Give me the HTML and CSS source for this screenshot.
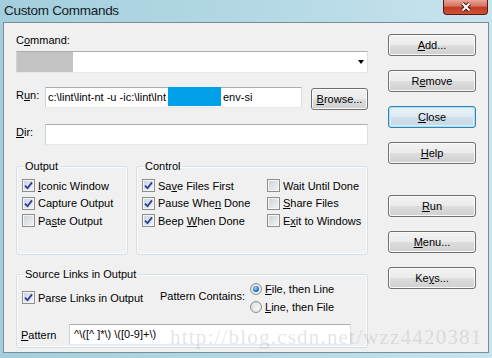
FILE: index.html
```html
<!DOCTYPE html>
<html lang="en">
<head>
    <meta charset="UTF-8">
    <meta name="viewport" content="width=device-width, initial-scale=1.0">
    <title>Custom Commands</title>
    <link rel="stylesheet" href="styles.css">
</head>
<body>
<div class="window">
    <div class="titlebar">
        <span class="title">Custom Commands</span>
        <div class="close-x">
            <svg width="14" height="10" viewBox="0 0 14 10">
                <path d="M3.5 1.5 L10.5 8.5 M10.5 1.5 L3.5 8.5" stroke="#4a1810" stroke-width="4" fill="none"/>
                <path d="M3.5 1.5 L10.5 8.5 M10.5 1.5 L3.5 8.5" stroke="#ffffff" stroke-width="2" fill="none"/>
            </svg>
        </div>
    </div>

    <div class="client">
        <div class="main">
            <div class="label">C<u>o</u>mmand:</div>
            <div class="combo">
                <span class="combo-sel"></span>
                <span class="combo-arrow"></span>
            </div>

            <div class="field-row run-row">
                <span class="field-label">R<u>u</u>n:</span>
                <div class="textbox run-box">c:\lint\lint-nt -u -ic:\lint\lnt<span class="mask"></span>env-si</div>
                <button class="btn browse"><u>B</u>rowse...</button>
            </div>

            <div class="field-row dir-row">
                <span class="field-label"><u>D</u>ir:</span>
                <div class="textbox dir-box"></div>
            </div>

            <!-- Output / Control -->
            <div class="groups">
                <fieldset class="group output">
                    <legend>Output</legend>
                    <div class="check-row"><span class="cb on"><svg width="9" height="9" viewBox="0 0 9 9"><path d="M1 4.6 L3.5 7.2 L8 1.4" fill="none" stroke="#2c3d8f" stroke-width="1.8"/></svg></span><span><u>I</u>conic Window</span></div>
                    <div class="check-row"><span class="cb on"><svg width="9" height="9" viewBox="0 0 9 9"><path d="M1 4.6 L3.5 7.2 L8 1.4" fill="none" stroke="#2c3d8f" stroke-width="1.8"/></svg></span><span>Capture Output</span></div>
                    <div class="check-row"><span class="cb"></span><span>Pa<u>s</u>te Output</span></div>
                </fieldset>
                <fieldset class="group control">
                    <legend>Control</legend>
                    <div class="check-grid">
                        <div class="check-row"><span class="cb on"><svg width="9" height="9" viewBox="0 0 9 9"><path d="M1 4.6 L3.5 7.2 L8 1.4" fill="none" stroke="#2c3d8f" stroke-width="1.8"/></svg></span><span>Sa<u>v</u>e Files First</span></div>
                        <div class="check-row"><span class="cb"></span><span>Wait Until Done</span></div>
                        <div class="check-row"><span class="cb on"><svg width="9" height="9" viewBox="0 0 9 9"><path d="M1 4.6 L3.5 7.2 L8 1.4" fill="none" stroke="#2c3d8f" stroke-width="1.8"/></svg></span><span>Pause Whe<u>n</u> Done</span></div>
                        <div class="check-row"><span class="cb"></span><span><u>S</u>hare Files</span></div>
                        <div class="check-row"><span class="cb on"><svg width="9" height="9" viewBox="0 0 9 9"><path d="M1 4.6 L3.5 7.2 L8 1.4" fill="none" stroke="#2c3d8f" stroke-width="1.8"/></svg></span><span>Beep <u>W</u>hen Done</span></div>
                        <div class="check-row"><span class="cb"></span><span>E<u>x</u>it to Windows</span></div>
                    </div>
                </fieldset>
            </div>

            <!-- Source links -->
            <fieldset class="group source">
                <legend>Source Links in Output</legend>
                <div class="source-top">
                    <div class="check-row parse"><span class="cb on"><svg width="9" height="9" viewBox="0 0 9 9"><path d="M1 4.6 L3.5 7.2 L8 1.4" fill="none" stroke="#2c3d8f" stroke-width="1.8"/></svg></span><span>Parse Links in Output</span></div>
                    <span class="pc-label">Pattern Contains:</span>
                    <div class="radios">
                        <div class="radio-row"><span class="rb on"></span><span><u>F</u>ile, then Line</span></div>
                        <div class="radio-row"><span class="rb"></span><span><u>L</u>ine, then File</span></div>
                    </div>
                </div>
                <div class="pattern-row">
                    <span class="pattern-label"><u>P</u>attern</span>
                    <div class="textbox pattern-box">^\([^ ]*\) \([0-9]+\)</div>
                </div>
            </fieldset>
        </div>

        <div class="side">
            <button class="btn"><u>A</u>dd...</button>
            <button class="btn">R<u>e</u>move</button>
            <button class="btn default"><u>C</u>lose</button>
            <button class="btn"><u>H</u>elp</button>
            <button class="btn spaced"><u>R</u>un</button>
            <button class="btn"><u>M</u>enu...</button>
            <button class="btn">Ke<u>y</u>s...</button>
        </div>
    </div>

    <div class="watermark">http://blog.csdn.net/wzz4420381</div>
</div>
</body>
</html>
```

FILE: styles.css
```css
body {
    margin: 0;
    font-family: "Liberation Sans", Arial, sans-serif;
    font-size: 11px;
    color: #000;
}
.window {
    position: relative;
    width: 492px;
    height: 358px;
    display: flex;
    flex-direction: column;
    overflow: hidden;
    background: linear-gradient(to right, #a4cedc, #b8dbe7 65%, #c8e4ee);
}
.titlebar {
    height: 22px;
    display: flex;
    justify-content: space-between;
    align-items: flex-start;
}
.title {
    padding-left: 4px;
    font-size: 13.5px;
    letter-spacing: -0.3px;
    line-height: 22px;
    color: #14202a;
}
.close-x {
    width: 45px;
    height: 15px;
    margin-right: 4px;
    box-sizing: border-box;
    border: 1px solid #5a1a10;
    border-top: none;
    border-radius: 0 0 4px 4px;
    background: linear-gradient(#e8a497, #d66e5c 45%, #c23a22 52%, #cf5236);
    display: flex;
    align-items: center;
    justify-content: center;
}
.client {
    flex: 1;
    margin: 0 3px 5px;
    border: 1px solid #7a8c98;
    background: #f0f0f0;
    display: flex;
    padding: 11px 12px 0 12px;
}
.main {
    width: 352px;
}
.side {
    width: 88px;
    margin-left: 20px;
    display: flex;
    flex-direction: column;
    gap: 14px;
}
.label {
    line-height: 13px;
}
u {
    text-decoration-thickness: 1px;
    text-underline-offset: 1px;
}

/* combo / text boxes */
.combo {
    margin-top: 4px;
    height: 22px;
    box-sizing: border-box;
    border: 1px solid;
    border-color: #abadb3 #dbdfe6 #e3e9ef #cfd3da;
    background: #fff;
    display: flex;
    align-items: center;
}
.combo-sel {
    width: 56px;
    align-self: stretch;
    background: #c3c3c3;
}
.combo-arrow {
    margin-left: auto;
    margin-right: 3px;
    border-top: 4px solid #000;
    border-left: 3.5px solid transparent;
    border-right: 3.5px solid transparent;
}
.field-row {
    display: flex;
    align-items: flex-start;
}
.run-row {
    margin-top: 14px;
}
.dir-row {
    margin-top: 14px;
}
.field-label {
    width: 29px;
    line-height: 13px;
    margin-top: 1.5px;
}
.textbox {
    height: 21px;
    box-sizing: border-box;
    border: 1px solid;
    border-color: #abadb3 #dbdfe6 #e3e9ef #cfd3da;
    background: #fff;
    display: flex;
    align-items: center;
    padding-left: 2px;
    white-space: nowrap;
    line-height: 13px;
}
.run-box {
    width: 257px;
}
.mask {
    align-self: stretch;
    width: 53px;
    margin: -1px 2px 1px 2px;
    background: #00a0e9;
}
.dir-box {
    width: 323px;
}

/* buttons */
.btn {
    width: 88px;
    height: 22px;
    padding: 0;
    font-family: inherit;
    font-size: 11px;
    color: #000;
    border: 1px solid #707070;
    border-radius: 3px;
    background: linear-gradient(#f2f2f2, #ebebeb 48%, #dddddd 52%, #cfcfcf);
    box-shadow: inset 0 0 0 1px #fbfbfb;
}
.btn.default {
    border-color: #3c7fb1;
    background: linear-gradient(#eaf3f8, #dde9f1 48%, #cfdfea 52%, #c6d8e4);
    box-shadow: inset 0 0 0 1px #9fe3f7, inset 0 0 0 2px #d8f1fa;
}
.btn.spaced {
    margin-top: 17px;
}
.browse {
    width: 57px;
    margin-left: 9px;
    margin-top: 1px;
}

/* group boxes */
.groups {
    margin-top: 15px;
    display: flex;
    gap: 8px;
}
.group {
    margin: 0;
    min-width: 0;
    box-sizing: border-box;
    padding: 4px 0 24px 5px;
    border: 1px solid #d5dfe5;
    border-radius: 3px;
    box-shadow: inset 0 0 0 1px #fafcfd;
}
.group legend {
    margin-left: 1px;
    padding: 0 2px;
    line-height: 13px;
}
.output {
    width: 112px;
}
.control {
    width: 232px;
}
.check-grid {
    display: grid;
    grid-template-columns: 125px 1fr;
}
.check-row {
    height: 17.5px;
    display: flex;
    align-items: center;
    white-space: nowrap;
}
.cb {
    width: 13px;
    height: 13px;
    box-sizing: border-box;
    margin-right: 3px;
    border: 1px solid #8e8f8f;
    background: linear-gradient(135deg, #cdd0d6, #f3f3f3);
    box-shadow: inset 0 0 0 1px #f4f4f4;
    display: flex;
    align-items: center;
    justify-content: center;
    flex-shrink: 0;
}
.cb.on {
    background: linear-gradient(135deg, #c9d2e4, #f1f4f9);
}
.source {
    margin-top: 13px;
    width: 352px;
    padding-bottom: 2px;
}
.source-top {
    margin-top: -5px;
    display: flex;
    align-items: center;
}
.parse {
    width: 138px;
}
.pc-label {
    width: 90px;
    margin-bottom: 3px;
}
.radio-row {
    height: 18px;
    display: flex;
    align-items: center;
}
.rb {
    width: 12px;
    height: 12px;
    box-sizing: border-box;
    margin-right: 3px;
    border: 1px solid #8e8f8f;
    border-radius: 50%;
    background: radial-gradient(circle at 60% 60%, #f6f6f6, #d4d6da);
    display: flex;
    align-items: center;
    justify-content: center;
}
.rb.on::after {
    content: "";
    width: 6px;
    height: 6px;
    border-radius: 50%;
    background: radial-gradient(circle at 40% 35%, #9fd4ff, #2478d0 55%, #0b4589);
}
.pattern-row {
    margin-top: 8.5px;
    display: flex;
    align-items: center;
}
.pattern-label {
    width: 48px;
    margin-left: -1px;
}
.pattern-box {
    width: 282px;
    padding-left: 4px;
}

.watermark {
    position: absolute;
    left: 170px;
    top: 325px;
    font-family: "Liberation Serif", "Times New Roman", serif;
    font-size: 21px;
    line-height: 24px;
    letter-spacing: 1.2px;
    color: rgba(150, 150, 150, 0.26);
    white-space: nowrap;
    pointer-events: none;
}
```
